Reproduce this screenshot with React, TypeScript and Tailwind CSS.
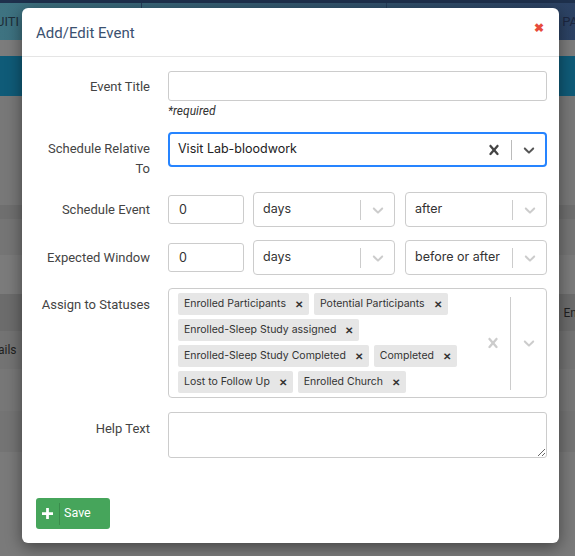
import React from 'react';

const labelFont = { fontFamily: 'Roboto, "Liberation Sans", sans-serif' };
const inputFont = { fontFamily: 'Inter, "Liberation Sans", sans-serif' };

const STATUSES = [
  'Enrolled Participants',
  'Potential Participants',
  'Enrolled-Sleep Study assigned',
  'Enrolled-Sleep Study Completed',
  'Completed',
  'Lost to Follow Up',
  'Enrolled Church',
];

function Chevron({ dark }: { dark?: boolean }) {
  return (
    <svg viewBox="0 0 20 20" className={`w-[18px] h-[18px] ${dark ? 'fill-[#555]' : 'fill-[#ccc]'}`}>
      <path d="M4.516 7.548c0.436-0.446 1.043-0.481 1.576 0l3.908 3.747 3.908-3.747c0.533-0.481 1.141-0.446 1.574 0 0.436 0.445 0.408 1.197 0 1.615-0.406 0.418-4.695 4.502-4.695 4.502-0.217 0.223-0.502 0.335-0.787 0.335s-0.57-0.112-0.789-0.335c0 0-4.287-4.084-4.695-4.502s-0.436-1.17 0-1.615z" />
    </svg>
  );
}

function ClearX({ dark }: { dark?: boolean }) {
  return (
    <svg viewBox="0 0 20 20" className={`w-[20px] h-[20px] ${dark ? 'fill-[#444]' : 'fill-[#ccc]'}`}>
      <path d="M14.348 14.849c-0.469 0.469-1.229 0.469-1.697 0l-2.651-3.030-2.651 3.029c-0.469 0.469-1.229 0.469-1.697 0-0.469-0.469-0.469-1.229 0-1.697l2.758-3.15-2.759-3.152c-0.469-0.469-0.469-1.228 0-1.697s1.228-0.469 1.697 0l2.652 3.031 2.651-3.031c0.469-0.469 1.228-0.469 1.697 0s0.469 1.229 0 1.697l-2.758 3.152 2.758 3.15c0.469 0.469 0.469 1.229 0 1.698z" />
    </svg>
  );
}

function Select({ value, className = '' }: { value: string; className?: string }) {
  return (
    <div className={`h-[35px] flex items-center border border-[#ccc] rounded-[4px] bg-white ${className}`} style={inputFont}>
      <div className="flex-1 pl-[9px] text-[12.5px] text-[#333] truncate">{value}</div>
      <div className="w-px h-[20px] bg-[#ccc]" />
      <div className="w-[33px] flex justify-center"><Chevron /></div>
    </div>
  );
}

function Row({ label, children, className = '' }: { label: React.ReactNode; children: React.ReactNode; className?: string }) {
  return (
    <div className={`grid grid-cols-[114px_1fr] gap-x-[18px] ${className}`}>
      <div className="text-right text-[13px] leading-[20px] text-[#444]" style={labelFont}>{label}</div>
      <div>{children}</div>
    </div>
  );
}

export default function App() {
  return (
    <div className="relative w-[575px] h-[556px] overflow-hidden bg-[#7a7a7a]" style={labelFont}>
      {/* dimmed page behind the modal */}
      <div className="flex flex-col">
        <div className="h-[3px] bg-[#1e304c]" />
        <div className="h-[37px] flex bg-gradient-to-r from-[#3e7381] via-[#34586f] to-[#2c4264] text-[#1e2e3a] text-[13px]">
          <div className="w-[142px] border-r border-[#263d5a] flex items-center overflow-hidden">
            <span className="ml-[-4px]">UITI</span>
          </div>
          <div className="w-[245px] border-r border-[#263d5a]" />
          <div className="flex-1 flex items-center justify-end">
            <span className="mr-[-3px] text-[#1c2740]">PA</span>
          </div>
        </div>
        <div className="h-[16px] bg-[#7c7c7c]" />
        <div className="h-[40px] bg-[#0f5b78]" />
        <div className="h-[109px] bg-[#787878]" />
        <div className="h-[14px] bg-[#6f6f6f]" />
        <div className="h-[36px] bg-[#757575]" />
        <div className="h-[39px] bg-[#7b7b7b]" />
        <div className="h-[37px] bg-[#6c6c6c] flex items-center justify-end text-[12px] text-[#1f1f1f]">
          <span className="mr-[-6px]">Enr</span>
        </div>
        <div className="h-[38px] bg-[#737373] flex items-center text-[12px] text-[#1f1f1f]">
          <span className="ml-[-2px]">ails</span>
        </div>
        <div className="h-[42px] bg-[#777]" />
        <div className="h-[41px] bg-[#747474]" />
      </div>

      {/* modal */}
      <div className="absolute left-[22px] top-[8px] w-[537px] h-[535px] bg-white rounded-[6px] shadow-[0_4px_16px_rgba(0,0,0,0.45)]">
        <div className="h-[49px] border-b border-[#e5e5e5] flex items-center justify-between pl-[14px] pr-[14px]">
          <h4 className="text-[15px] text-[#3b5170] pt-[3px]">Add/Edit Event</h4>
          <span className="text-[#e74c3c] text-[12px] font-bold leading-none mb-[9px] mr-[1px]">✖</span>
        </div>

        <div className="pl-[14px] pr-[12px] pt-[14px]">
          <Row label={<div className="pt-[6px]">Event Title</div>}>
            <input className="w-full h-[30px] border border-[#ccc] rounded-[3px] outline-none" />
            <div className="text-[12px] italic text-[#333] mt-[1px] leading-[18px]">*required</div>
          </Row>

          <Row className="mt-[12px]" label={<div className="pt-[7px]">Schedule Relative<br />To</div>}>
            <div className="h-[35px] flex items-center border-2 border-[#2684ff] rounded-[4px] bg-white" style={inputFont}>
              <div className="flex-1 pl-[8px] text-[12.5px] text-[#222]">Visit Lab-bloodwork</div>
              <div className="w-[34px] flex justify-center"><ClearX dark /></div>
              <div className="w-px h-[20px] bg-[#bbb]" />
              <div className="w-[33px] flex justify-center"><Chevron dark /></div>
            </div>
          </Row>

          <Row className="mt-[13px]" label={<div className="pt-[8px]">Schedule Event</div>}>
            <div className="flex items-center gap-[9px]">
              <input defaultValue="0" className="w-[76px] h-[29px] border border-[#ccc] rounded-[3px] px-[10px] text-[12.5px] text-[#333] outline-none" style={inputFont} />
              <Select value="days" className="w-[142px]" />
              <Select value="after" className="flex-1 ml-[1px]" />
            </div>
          </Row>

          <Row className="mt-[13px]" label={<div className="pt-[8px]">Expected Window</div>}>
            <div className="flex items-center gap-[9px]">
              <input defaultValue="0" className="w-[76px] h-[29px] border border-[#ccc] rounded-[3px] px-[10px] text-[12.5px] text-[#333] outline-none" style={inputFont} />
              <Select value="days" className="w-[142px]" />
              <Select value="before or after" className="flex-1 ml-[1px]" />
            </div>
          </Row>

          <Row className="mt-[13px]" label={<div className="pt-[7px]">Assign to Statuses</div>}>
            <div className="h-[110px] flex border border-[#ccc] rounded-[4px] bg-white" style={inputFont}>
              <div className="flex-1 flex flex-wrap content-start gap-x-[5px] gap-y-[4px] pl-[9px] pr-[6px] pt-[4px]">
                {STATUSES.map(s => (
                  <div key={s} className="h-[22px] flex items-center bg-[#e6e6e6] rounded-[2px] pl-[6px] pr-[6px] text-[10.5px] text-[#333]">
                    <span>{s}</span>
                    <span className="ml-[9px] text-[10px] font-bold text-[#333]">✕</span>
                  </div>
                ))}
              </div>
              <div className="flex items-center">
                <div className="w-[34px] flex justify-center"><ClearX /></div>
                <div className="w-px h-[93px] bg-[#ccc]" />
                <div className="w-[35px] flex justify-center"><Chevron /></div>
              </div>
            </div>
          </Row>

          <Row className="mt-[14px]" label={<div className="pt-[7px]">Help Text</div>}>
            <textarea className="block w-full h-[46px] border border-[#ccc] rounded-[3px] outline-none resize-y" />
          </Row>

          <div className="mt-[40px]">
            <button className="h-[31px] w-[74px] flex items-center bg-[#46a55b] rounded-[3px] text-white">
              <span className="w-[23px] flex justify-center">
                <svg viewBox="0 0 12 12" className="w-[11px] h-[11px] fill-white"><path d="M4.5 0h3v4.5H12v3H7.5V12h-3V7.5H0v-3h4.5z" /></svg>
              </span>
              <span className="w-px h-[22px] bg-[#3a8c4c]" />
              <span className="pl-[4px] text-[12.5px]">Save</span>
            </button>
          </div>
        </div>
      </div>
    </div>
  );
}
